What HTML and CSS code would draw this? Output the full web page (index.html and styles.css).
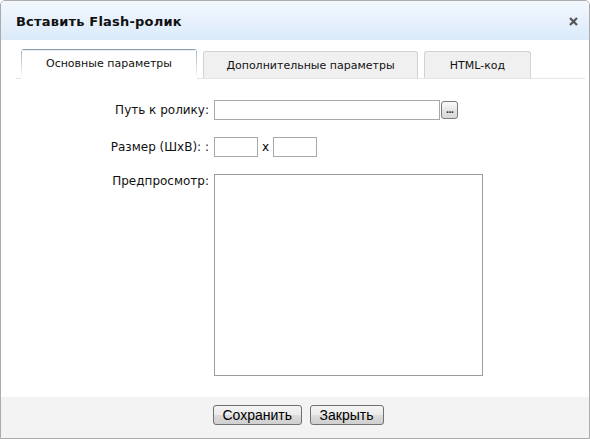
FILE: index.html
```html
<!DOCTYPE html>
<html lang="ru">
<head>
<meta charset="utf-8">
<title>Вставить Flash-ролик</title>
<link rel="stylesheet" href="styles.css">
</head>
<body>
<div class="dialog">
  <div class="header">
    <span class="title">Вставить Flash-ролик</span>
    <svg class="close" width="9" height="9" viewBox="0 0 9 9"><path d="M1 1 L8 8 M8 1 L1 8" stroke="#555" stroke-width="2.2" stroke-linecap="butt"/></svg>
  </div>
  <div class="content">
    <div class="tabs">
      <div class="tab tab-active tab-1">Основные параметры</div>
      <div class="tab tab-2">Дополнительные параметры</div>
      <div class="tab tab-3">HTML-код</div>
    </div>
    <div class="form">
      <label class="label">Путь к ролику:</label>
      <div class="field">
        <input class="input input-path" type="text">
        <button class="browse" type="button">...</button>
      </div>
      <label class="label">Размер (ШхВ): :</label>
      <div class="field">
        <input class="input input-size" type="text">
        <span class="times">x</span>
        <input class="input input-size" type="text">
      </div>
      <label class="label label-top">Предпросмотр:</label>
      <div class="preview"></div>
    </div>
  </div>
  <div class="footer">
    <button class="btn btn-save" type="button">Сохранить</button>
    <button class="btn btn-close" type="button">Закрыть</button>
  </div>
</div>
</body>
</html>
```

FILE: styles.css
```css
html, body {
  margin: 0;
  padding: 0;
  background: #ffffff;
}

.dialog {
  width: 590px;
  height: 439px;
  box-sizing: border-box;
  border: 1px solid #ababab;
  border-radius: 5px 5px 0 0;
  display: flex;
  flex-direction: column;
  overflow: hidden;
  font-family: "DejaVu Sans", Verdana, sans-serif;
  font-size: 12px;
  color: #000;
  background: #fff;
}

.header {
  height: 39px;
  flex: none;
  display: flex;
  align-items: center;
  justify-content: space-between;
  padding: 1px 11px 0 15px;
  box-sizing: border-box;
  background: linear-gradient(#f3f8fe, #dbeafa);
}

.title {
  font-weight: bold;
  font-size: 13px;
  color: #111;
  letter-spacing: 0.2px;
}

.close {
  display: block;
}

.content {
  flex: 1;
  padding: 9px 4px 0 15px;
}

.tabs {
  display: flex;
  align-items: flex-end;
  height: 29px;
  padding-left: 5px;
  border-bottom: 1px solid #e6e6e6;
}

.tab {
  box-sizing: border-box;
  height: 27px;
  display: flex;
  align-items: center;
  justify-content: center;
  white-space: nowrap;
  font-size: 11px;
  color: #111;
  background: #f0f0f0;
  border: 1px solid #d2d2d2;
  border-bottom: 0;
  border-radius: 3px 3px 0 0;
  margin-right: 6px;
}

.tab-active {
  height: 30px;
  margin-bottom: -1px;
  border: 0;
  padding-bottom: 1px;
  background:
    linear-gradient(#8b9fb0, #8b9fb0) top left / 100% 1px no-repeat,
    linear-gradient(#e9eef2, #e9eef2) 0 1px / 100% 1px no-repeat,
    linear-gradient(#9fb0be, #ffffff) top left / 1px 100% no-repeat,
    linear-gradient(#9fb0be, #ffffff) top right / 1px 100% no-repeat,
    #ffffff;
}

.tab-1 { width: 176px; }
.tab-2 { width: 215px; }
.tab-3 { width: 107px; margin-right: 0; }

.form {
  display: grid;
  grid-template-columns: 193px auto;
  column-gap: 5px;
  row-gap: 17px;
  margin-top: 21px;
  align-items: center;
}

.label {
  text-align: right;
  white-space: nowrap;
  color: #111;
}

.label-top {
  align-self: start;
}

.field {
  display: flex;
  align-items: center;
}

.input {
  box-sizing: border-box;
  height: 20px;
  margin: 0;
  padding: 1px 3px;
  border: 1px solid #a8a8a8;
  background: #fff;
  font: inherit;
  outline: none;
}

.input-path {
  width: 226px;
}

.input-size {
  width: 44px;
}

.times {
  margin: 0 4px;
  line-height: 14px;
}

.browse {
  box-sizing: border-box;
  width: 17px;
  height: 18px;
  margin: 0 0 0 1px;
  padding: 0 0 3px 0;
  border: 1px solid #7a7a7a;
  border-radius: 3px;
  background: linear-gradient(#fbfbfb, #e4e4e4 55%, #d8d8d8);
  font-family: "DejaVu Sans", sans-serif;
  font-size: 9px;
  font-weight: bold;
  line-height: 10px;
  color: #333;
  display: flex;
  align-items: flex-end;
  justify-content: center;
  letter-spacing: -1px;
}

.preview {
  box-sizing: border-box;
  width: 269px;
  height: 202px;
  border: 1px solid #9c9c9c;
  background: #fff;
}

.footer {
  flex: none;
  height: 41px;
  box-sizing: border-box;
  background: #f3f3f3;
  display: flex;
  justify-content: center;
  align-items: flex-start;
  gap: 8px;
  padding: 8px 0 0 6px;
}

.btn {
  box-sizing: border-box;
  height: 20px;
  margin: 0;
  padding: 0 9px;
  border: 1px solid #707070;
  border-radius: 3px;
  background: linear-gradient(#f4f4f4, #ebebeb 50%, #dddddd 50%, #cfcfcf);
  font-family: "Liberation Sans", Arial, sans-serif;
  font-size: 14px;
  line-height: 16px;
  color: #000;
}

.btn-save { width: 89px; }
.btn-close { width: 74px; }
```
